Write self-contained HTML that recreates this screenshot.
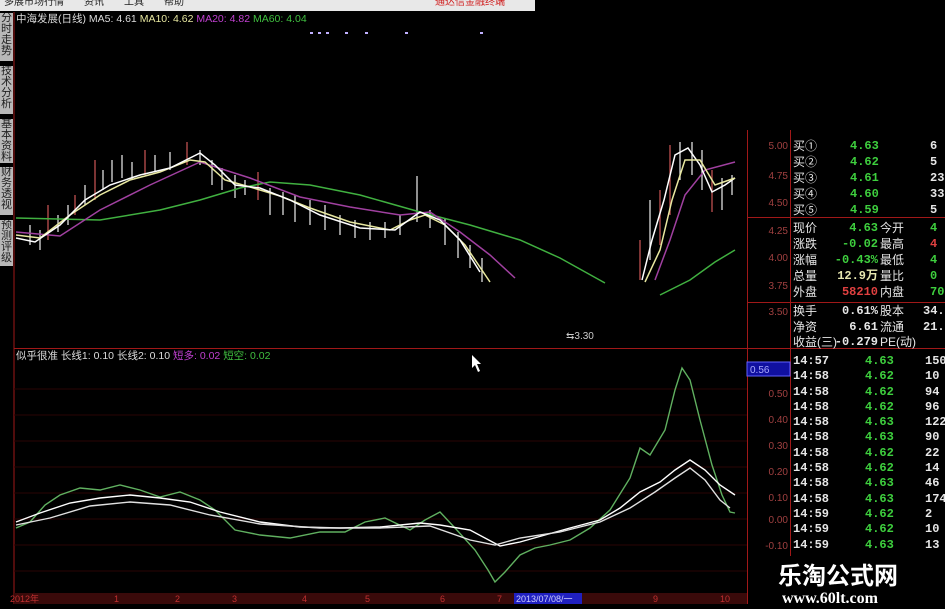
<!DOCTYPE html>
<html><head><meta charset="utf-8"><style>
*{margin:0;padding:0}
body{width:945px;height:609px;background:#000;overflow:hidden;position:relative;font-family:"Liberation Sans","Noto Sans CJK SC",sans-serif}
.t{position:absolute;white-space:nowrap;font-size:11px;line-height:12px}
.tab{position:absolute;left:0;width:13px;background:#b8b8b8;color:#222;font-size:11px;line-height:11px;text-align:center;overflow:hidden}
.r{position:absolute;font-family:"Liberation Mono","Noto Sans CJK SC",monospace;font-weight:bold;font-size:12px;line-height:14px;white-space:nowrap}
.g{color:#3ecf3e}.w{color:#e6e6e6}.rd{color:#e04040}.y{color:#e8e8b0}
</style></head><body>
<div style="position:absolute;left:0;top:0;width:535px;height:11px;background:#e8e8e8"></div>
<div class="t" style="left:4px;top:-3px;color:#222;font-size:10px">多展市场行情　　资讯　　工具　　帮助</div>
<div class="t" style="left:435px;top:-3px;color:#d02020;font-size:10px">通达信金融终端</div>
<div class="tab" style="top:13px;height:48px">分时走势</div>
<div class="tab" style="top:66px;height:48px">技术分析</div>
<div class="tab" style="top:119px;height:44px">基本资料</div>
<div class="tab" style="top:167px;height:48px">财务透视</div>
<div class="tab" style="top:220px;height:46px">预测评级</div>
<div class="t" style="left:16px;top:13px;font-size:10.5px"><span style="color:#ddd">中海发展(日线) MA5: 4.61</span> <span style="color:#e8e8a0">MA10: 4.62</span> <span style="color:#c040d0">MA20: 4.82</span> <span style="color:#40c040">MA60: 4.04</span></div>
<div class="t" style="left:16px;top:350px;font-size:10.5px"><span style="color:#ddd">似乎很准 长线1: 0.10 长线2: 0.10</span> <span style="color:#c040d0">短多: 0.02</span> <span style="color:#40c040">短空: 0.02</span></div>
<svg width="945" height="609" style="position:absolute;left:0;top:0">
<g stroke="#a01818" stroke-width="1" fill="none">
<line x1="14" y1="12" x2="14" y2="604"/>
<line x1="747.5" y1="130" x2="747.5" y2="604"/>
<line x1="790.5" y1="130" x2="790.5" y2="560"/>
<line x1="747" y1="217.5" x2="945" y2="217.5"/>
<line x1="747" y1="302.5" x2="945" y2="302.5"/>
<line x1="14" y1="348.5" x2="945" y2="348.5"/>
</g>
<g stroke="#2a0505" stroke-width="1">
<line x1="14" y1="389" x2="747" y2="389"/><line x1="14" y1="415" x2="747" y2="415"/><line x1="14" y1="441" x2="747" y2="441"/><line x1="14" y1="467" x2="747" y2="467"/><line x1="14" y1="493" x2="747" y2="493"/><line x1="14" y1="519" x2="747" y2="519"/><line x1="14" y1="545" x2="747" y2="545"/><line x1="14" y1="571" x2="747" y2="571"/>
</g>
<g fill="#c0b0ff"><rect x="310" y="32" width="3" height="2"/><rect x="318" y="32" width="3" height="2"/><rect x="326" y="32" width="3" height="2"/><rect x="345" y="32" width="3" height="2"/><rect x="365" y="32" width="3" height="2"/><rect x="405" y="32" width="3" height="2"/><rect x="480" y="32" width="3" height="2"/></g>
<g stroke-width="1.3">
<line x1="30" y1="225" x2="30" y2="245" stroke="#ddd"/><line x1="40" y1="230" x2="40" y2="250" stroke="#ddd"/><line x1="48" y1="205" x2="48" y2="240" stroke="#c05050"/><line x1="58" y1="215" x2="58" y2="232" stroke="#ddd"/><line x1="68" y1="205" x2="68" y2="225" stroke="#ddd"/><line x1="75" y1="195" x2="75" y2="215" stroke="#c05050"/><line x1="85" y1="185" x2="85" y2="205" stroke="#ddd"/><line x1="95" y1="160" x2="95" y2="200" stroke="#c05050"/><line x1="103" y1="170" x2="103" y2="190" stroke="#ddd"/><line x1="112" y1="160" x2="112" y2="182" stroke="#ddd"/><line x1="122" y1="155" x2="122" y2="178" stroke="#ddd"/><line x1="132" y1="162" x2="132" y2="180" stroke="#ddd"/><line x1="145" y1="150" x2="145" y2="175" stroke="#c05050"/><line x1="155" y1="155" x2="155" y2="172" stroke="#ddd"/><line x1="170" y1="152" x2="170" y2="170" stroke="#ddd"/><line x1="187" y1="142" x2="187" y2="165" stroke="#c05050"/><line x1="200" y1="150" x2="200" y2="165" stroke="#ddd"/><line x1="212" y1="160" x2="212" y2="185" stroke="#ddd"/><line x1="222" y1="168" x2="222" y2="190" stroke="#ddd"/><line x1="235" y1="175" x2="235" y2="198" stroke="#ddd"/><line x1="245" y1="180" x2="245" y2="195" stroke="#ddd"/><line x1="258" y1="172" x2="258" y2="200" stroke="#c05050"/><line x1="270" y1="188" x2="270" y2="215" stroke="#ddd"/><line x1="283" y1="192" x2="283" y2="215" stroke="#ddd"/><line x1="295" y1="195" x2="295" y2="222" stroke="#ddd"/><line x1="310" y1="200" x2="310" y2="225" stroke="#ddd"/><line x1="325" y1="205" x2="325" y2="230" stroke="#ddd"/><line x1="340" y1="215" x2="340" y2="235" stroke="#ddd"/><line x1="355" y1="220" x2="355" y2="238" stroke="#ddd"/><line x1="370" y1="222" x2="370" y2="240" stroke="#ddd"/><line x1="385" y1="222" x2="385" y2="238" stroke="#ddd"/><line x1="400" y1="215" x2="400" y2="235" stroke="#ddd"/><line x1="417" y1="176" x2="417" y2="222" stroke="#ddd"/><line x1="430" y1="210" x2="430" y2="228" stroke="#ddd"/><line x1="445" y1="218" x2="445" y2="245" stroke="#ddd"/><line x1="458" y1="232" x2="458" y2="258" stroke="#ddd"/><line x1="470" y1="245" x2="470" y2="268" stroke="#ddd"/><line x1="482" y1="258" x2="482" y2="282" stroke="#ddd"/>
<line x1="640" y1="240" x2="640" y2="280" stroke="#c05050"/><line x1="650" y1="200" x2="650" y2="260" stroke="#ddd"/><line x1="660" y1="190" x2="660" y2="245" stroke="#c05050"/><line x1="670" y1="145" x2="670" y2="215" stroke="#c05050"/><line x1="680" y1="142" x2="680" y2="180" stroke="#ddd"/><line x1="692" y1="142" x2="692" y2="175" stroke="#ddd"/><line x1="702" y1="150" x2="702" y2="190" stroke="#ddd"/><line x1="712" y1="170" x2="712" y2="212" stroke="#c05050"/><line x1="722" y1="178" x2="722" y2="210" stroke="#ddd"/><line x1="732" y1="175" x2="732" y2="195" stroke="#ddd"/>
</g>
<g fill="none" stroke-width="1.5">
<polyline stroke="#40b040" points="16,218 100,220 160,210 200,200 240,188 270,182 310,185 360,195 420,212 470,225 520,240 560,258 605,283"/>
<polyline stroke="#40b040" points="660,295 690,280 715,262 735,250"/>
<polyline stroke="#a040a0" points="16,232 60,236 100,210 150,185 200,162 250,178 300,197 350,207 400,215 430,212 460,232 490,255 515,278"/>
<polyline stroke="#a040a0" points="655,280 670,240 685,195 705,170 735,162"/>
<polyline stroke="#e8e8a0" points="16,235 40,238 70,215 100,195 130,180 160,172 190,160 205,162 225,180 250,187 280,196 310,208 350,222 390,230 410,220 425,215 445,225 465,245 490,282"/>
<polyline stroke="#ffffff" points="16,238 35,242 60,225 85,200 110,185 140,175 170,168 200,153 215,165 235,185 260,188 290,200 320,215 360,228 395,230 420,212 440,220 460,240 480,272"/>
<polyline stroke="#ffffff" points="642,280 652,240 664,200 675,155 688,148 700,165 712,192 725,185 735,178"/>
<polyline stroke="#e8e8a0" points="645,282 660,250 672,200 685,160 700,160 715,185 735,178"/>
</g>
<g fill="none" stroke-width="1.4">
<polyline stroke="#60b060" points="16,528 30,522 45,505 60,495 80,488 100,490 120,485 140,490 160,497 180,492 200,500 215,510 235,530 260,535 290,538 320,532 345,532 365,522 385,518 410,530 425,520 440,512 455,528 475,550 488,570 495,582 505,572 520,555 535,548 550,545 570,540 590,528 610,510 630,478 640,448 650,455 665,430 675,390 682,368 690,380 700,420 712,465 722,495 730,512 735,513"/>
<polyline stroke="#ffffff" points="16,522 40,513 70,503 100,498 130,495 160,498 190,502 220,512 260,522 300,527 340,528 380,527 420,523 440,525 470,530 500,546 520,542 545,535 570,528 600,520 620,508 640,492 660,482 675,470 690,460 705,470 720,485 735,495"/>
<polyline stroke="#e0e0e0" points="16,525 50,518 90,506 130,502 170,505 210,515 260,524 320,528 380,528 430,526 470,540 495,545 520,538 560,532 600,522 630,508 655,492 675,478 690,468 705,480 720,500 730,508"/>
</g>
<path d="M472 355 L472 368 L475 365 L478 372 L480 371 L477 364 L481 364 Z" fill="#fff"/>
<text x="566" y="339" fill="#ccc" font-size="10" font-family="Liberation Sans">⇆3.30</text>
<rect x="14" y="593" width="733" height="11" fill="#3a0a0a"/>
<rect x="514" y="593" width="68" height="11" fill="#2020c0"/>
<rect x="747" y="362" width="43" height="14" fill="#1010a0" stroke="#6060ff"/>
<text x="750" y="373" fill="#aaf" font-size="10" font-family="Liberation Sans">0.56</text>
<g fill="#c03030" font-size="9" font-family="Liberation Sans"><text x="10" y="602">2012年</text><text x="114" y="602">1</text><text x="175" y="602">2</text><text x="232" y="602">3</text><text x="302" y="602">4</text><text x="365" y="602">5</text><text x="440" y="602">6</text><text x="497" y="602">7</text><text x="653" y="602">9</text><text x="720" y="602">10</text></g>
<text x="516" y="602" fill="#ccf" font-size="9" font-family="Liberation Sans">2013/07/08/一</text>
<g fill="#a04040" font-size="10" font-family="Liberation Sans" text-anchor="end">
<text x="788" y="149">5.00</text><text x="788" y="179">4.75</text><text x="788" y="206">4.50</text><text x="788" y="234">4.25</text><text x="788" y="261">4.00</text><text x="788" y="289">3.75</text><text x="788" y="315">3.50</text>
<text x="788" y="397">0.50</text><text x="788" y="423">0.40</text><text x="788" y="449">0.30</text><text x="788" y="475">0.20</text><text x="788" y="501">0.10</text><text x="788" y="523">0.00</text><text x="788" y="549">-0.10</text>
</g>
</svg>
<div class="r w" style="left:793px;top:138px;font-family:'Liberation Sans','Noto Sans CJK SC',sans-serif;font-weight:normal;line-height:16px">买①<br>买②<br>买③<br>买④<br>买⑤</div>
<div class="r g" style="left:850px;top:138px;line-height:16px">4.63<br>4.62<br>4.61<br>4.60<br>4.59</div>
<div class="r w" style="left:930px;top:138px;line-height:16px">6<br>5<br>23<br>33<br>5</div>
<div class="r w" style="left:793px;top:220px;font-family:'Liberation Sans','Noto Sans CJK SC',sans-serif;font-weight:normal;line-height:16px">现价<br>涨跌<br>涨幅<br>总量<br>外盘</div>
<div class="r" style="left:830px;top:220px;line-height:16px;text-align:right;width:48px"><span class="g">4.63</span><br><span class="g">-0.02</span><br><span class="g">-0.43%</span><br><span class="y">12.9万</span><br><span class="rd">58210</span></div>
<div class="r w" style="left:880px;top:220px;font-family:'Liberation Sans','Noto Sans CJK SC',sans-serif;font-weight:normal;line-height:16px">今开<br>最高<br>最低<br>量比<br>内盘</div>
<div class="r" style="left:930px;top:220px;line-height:16px"><span class="g">4</span><br><span class="rd">4</span><br><span class="g">4</span><br><span class="g">0</span><br><span class="g">709</span></div>
<div class="r w" style="left:793px;top:304px;font-family:'Liberation Sans','Noto Sans CJK SC',sans-serif;font-weight:normal;line-height:15.5px">换手<br>净资<br>收益(三)</div>
<div class="r w" style="left:830px;top:304px;line-height:15.5px;text-align:right;width:48px">0.61%<br>6.61<br>-0.279</div>
<div class="r w" style="left:880px;top:304px;font-family:'Liberation Sans','Noto Sans CJK SC',sans-serif;font-weight:normal;line-height:15.5px">股本<br>流通<br>PE(动)</div>
<div class="r w" style="left:923px;top:304px;line-height:15.5px">34.0<br>21.1</div>
<div class="r w" style="left:793px;top:354px;line-height:15.3px">14:57<br>14:58<br>14:58<br>14:58<br>14:58<br>14:58<br>14:58<br>14:58<br>14:58<br>14:58<br>14:59<br>14:59<br>14:59</div>
<div class="r g" style="left:865px;top:354px;line-height:15.3px">4.63<br>4.62<br>4.62<br>4.62<br>4.63<br>4.63<br>4.62<br>4.62<br>4.63<br>4.63<br>4.62<br>4.62<br>4.63</div>
<div class="r w" style="left:925px;top:354px;line-height:15.3px">150<br>10<br>94<br>96<br>122<br>90<br>22<br>14<br>46<br>174<br>2<br>10<br>13</div>
<div style="position:absolute;left:770px;top:556px;width:175px;height:53px;background:#000"></div>
<div class="t" style="left:778px;top:560px;color:#fff;font-size:24px;line-height:28px;font-weight:bold;font-family:'Noto Sans CJK SC',sans-serif">乐淘公式网</div>
<div class="t" style="left:782px;top:590px;color:#fff;font-size:16px;line-height:18px;font-weight:bold;font-family:'Liberation Serif',serif">www.60lt.com</div>
</body></html>
